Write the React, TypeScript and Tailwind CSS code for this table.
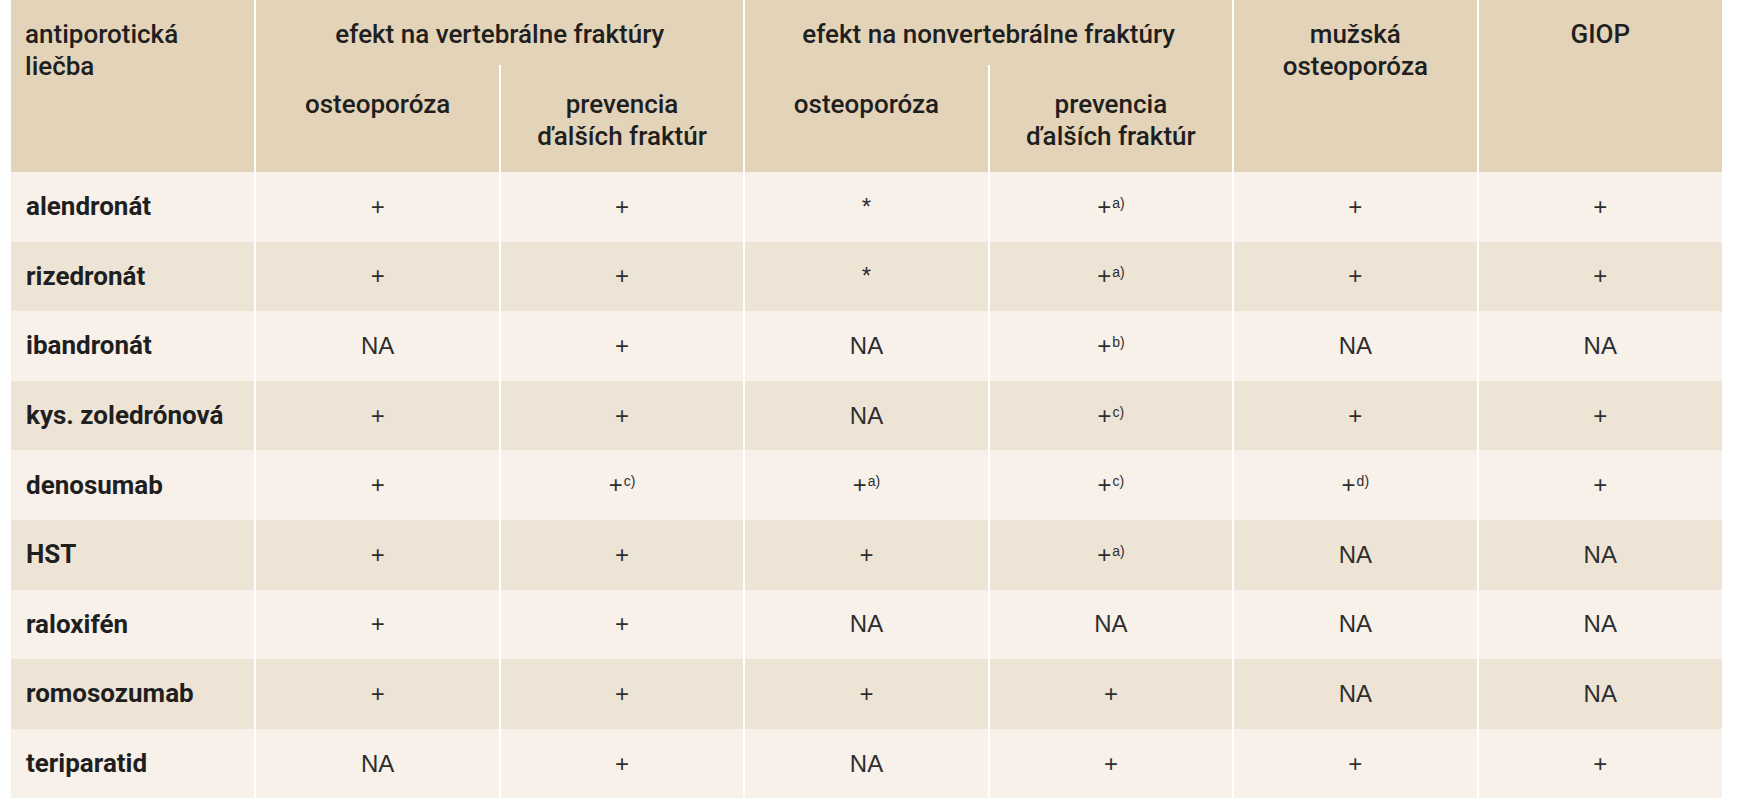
import React from 'react';

// Table rows: drug name + six column values. Superscripts marked with "^".
const rows: [string, string[]][] = [
  ['alendronát', ['+', '+', '*', '+^a)', '+', '+']],
  ['rizedronát', ['+', '+', '*', '+^a)', '+', '+']],
  ['ibandronát', ['NA', '+', 'NA', '+^b)', 'NA', 'NA']],
  ['kys. zoledrónová', ['+', '+', 'NA', '+^c)', '+', '+']],
  ['denosumab', ['+', '+^c)', '+^a)', '+^c)', '+^d)', '+']],
  ['HST', ['+', '+', '+', '+^a)', 'NA', 'NA']],
  ['raloxifén', ['+', '+', 'NA', 'NA', 'NA', 'NA']],
  ['romosozumab', ['+', '+', '+', '+', 'NA', 'NA']],
  ['teriparatid', ['NA', '+', 'NA', '+', '+', '+']],
];

const Value: React.FC<{ v: string }> = ({ v }) => {
  const [main, sup] = v.split('^');
  return (
    <span>
      {main}
      {sup && <sup className="text-[14px] ml-[1px]">{sup}</sup>}
    </span>
  );
};

const App: React.FC = () => {
  return (
    <div className="w-[1745px] h-[800px] bg-white overflow-hidden pl-[11px]">
      <table
        className="table-fixed border-collapse w-[1711px] text-[#1f1f1f]"
        style={{ fontFamily: 'Roboto, "Liberation Sans", sans-serif' }}
      >
        <thead className="bg-[#e3d3b8] text-[26px] leading-[32px]">
          <tr className="h-[65px]">
            <th rowSpan={2} className="align-top text-left font-medium pl-[14px] pt-[18px] border-r-2 border-white">
              antiporotická
              <br />
              liečba
            </th>
            <th colSpan={2} className="align-top font-medium pt-[18px] border-r-2 border-white">
              efekt na vertebrálne fraktúry
            </th>
            <th colSpan={2} className="align-top font-medium pt-[18px] border-r-2 border-white">
              efekt na nonvertebrálne fraktúry
            </th>
            <th rowSpan={2} className="align-top font-medium pt-[18px] border-r-2 border-white">
              mužská
              <br />
              osteoporóza
            </th>
            <th rowSpan={2} className="align-top font-medium pt-[18px]">
              GIOP
            </th>
          </tr>
          <tr className="h-[107px]">
            <th className="align-top font-medium pt-[23px] border-r-2 border-white">osteoporóza</th>
            <th className="align-top font-medium pt-[23px] border-r-2 border-white">
              prevencia
              <br />
              ďalších fraktúr
            </th>
            <th className="align-top font-medium pt-[23px] border-r-2 border-white">osteoporóza</th>
            <th className="align-top font-medium pt-[23px] border-r-2 border-white">
              prevencia
              <br />
              ďalších fraktúr
            </th>
          </tr>
        </thead>
        <tbody>
          {rows.map(([name, values], i) => (
            <tr key={name} className={`h-[69.6px] ${i % 2 === 0 ? 'bg-[#f8f1ea]' : 'bg-[#eee4d6]'}`}>
              <td className="pl-[15px] text-[26px] font-bold border-r-2 border-white">{name}</td>
              {values.map((v, j) => (
                <td
                  key={j}
                  className={`text-center text-[24px] text-[#2e2e2e] ${j < 5 ? 'border-r-2 border-white' : ''}`}
                  style={{ fontFamily: '"Liberation Sans", Arial, sans-serif' }}
                >
                  <Value v={v} />
                </td>
              ))}
            </tr>
          ))}
        </tbody>
      </table>
    </div>
  );
};

export default App;
